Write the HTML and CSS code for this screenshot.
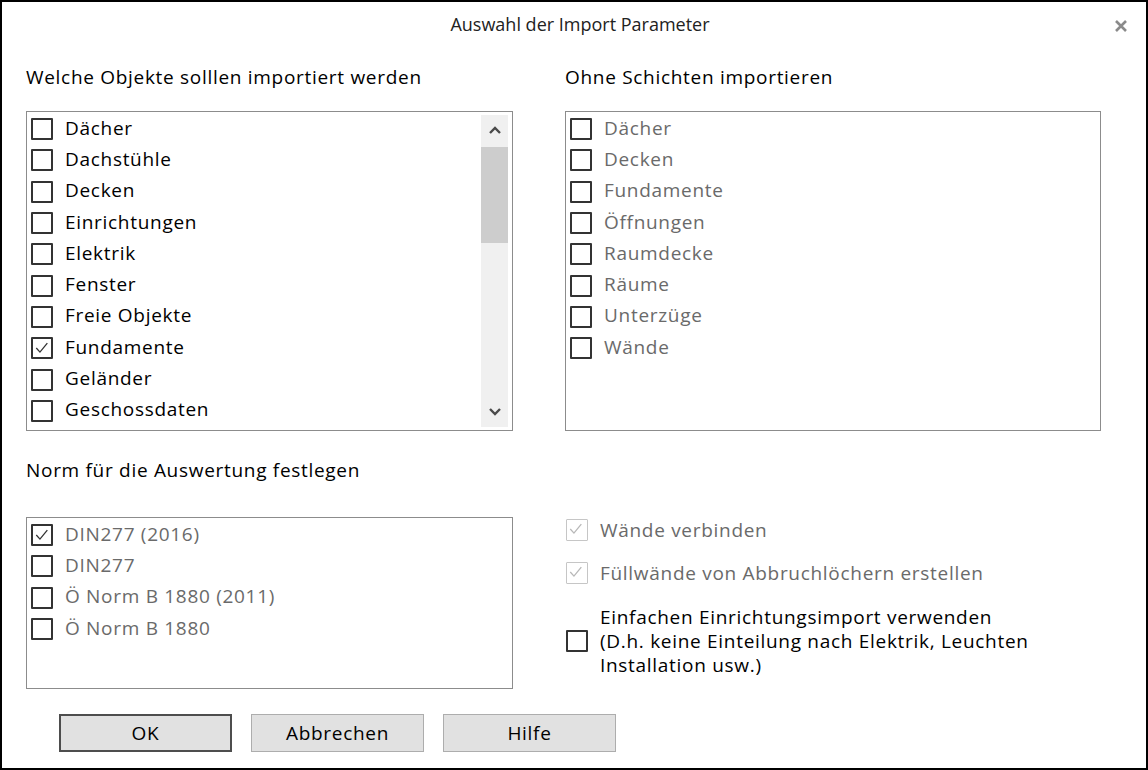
FILE: index.html
```html
<!DOCTYPE html>
<html lang="de">
  <head>
    <meta charset="UTF-8" />
    <title>Auswahl der Import Parameter</title>
    <link rel="stylesheet" href="styles.css">
  </head>
  <body>
    <div class="dialog">
      <div class="titlebar">
        <span class="title">Auswahl der Import Parameter</span>
        <span class="close">
          <svg width="14" height="14" viewBox="0 0 14 14">
            <path d="M2 2 L12 12 M12 2 L2 12" stroke="#8a8a8a" stroke-width="2.6" />
          </svg>
        </span>
      </div>

      <div class="top">
        <section class="col col-left">
          <h2>Welche Objekte solllen importiert werden</h2>
          <div class="listbox objects">
            <ul class="items">
              <li><span class="box"></span>Dächer</li>
              <li><span class="box"></span>Dachstühle</li>
              <li><span class="box"></span>Decken</li>
              <li><span class="box"></span>Einrichtungen</li>
              <li><span class="box"></span>Elektrik</li>
              <li><span class="box"></span>Fenster</li>
              <li><span class="box"></span>Freie Objekte</li>
              <li><span class="box checked"><svg viewBox="0 0 22 22"><polyline points="4,11 8.5,16 17.5,5" /></svg></span>Fundamente</li>
              <li><span class="box"></span>Geländer</li>
              <li><span class="box"></span>Geschossdaten</li>
            </ul>
            <div class="scrollbar">
              <div class="arrow">
                <svg width="14" height="10" viewBox="0 0 14 10"><polyline points="2,8 7,3 12,8" /></svg>
              </div>
              <div class="track"><div class="thumb"></div></div>
              <div class="arrow">
                <svg width="14" height="10" viewBox="0 0 14 10"><polyline points="2,2 7,7 12,2" /></svg>
              </div>
            </div>
          </div>
        </section>

        <section class="col col-right">
          <h2>Ohne Schichten importieren</h2>
          <div class="listbox layers">
            <ul class="items muted">
              <li><span class="box"></span>Dächer</li>
              <li><span class="box"></span>Decken</li>
              <li><span class="box"></span>Fundamente</li>
              <li><span class="box"></span>Öffnungen</li>
              <li><span class="box"></span>Raumdecke</li>
              <li><span class="box"></span>Räume</li>
              <li><span class="box"></span>Unterzüge</li>
              <li><span class="box"></span>Wände</li>
            </ul>
          </div>
        </section>
      </div>

      <div class="bottom">
        <section class="col col-left">
          <h2>Norm für die Auswertung festlegen</h2>
          <div class="listbox norm">
            <ul class="items muted">
              <li><span class="box checked"><svg viewBox="0 0 22 22"><polyline points="4,11 8.5,16 17.5,5" /></svg></span>DIN277 (2016)</li>
              <li><span class="box"></span>DIN277</li>
              <li><span class="box"></span>Ö Norm B 1880 (2011)</li>
              <li><span class="box"></span>Ö Norm B 1880</li>
            </ul>
          </div>
        </section>

        <div class="col options">
          <label class="option disabled">
            <span class="box checked"><svg viewBox="0 0 22 22"><polyline points="4,11 8.5,16 17.5,5" /></svg></span>
            <span>Wände verbinden</span>
          </label>
          <label class="option disabled second">
            <span class="box checked"><svg viewBox="0 0 22 22"><polyline points="4,11 8.5,16 17.5,5" /></svg></span>
            <span>Füllwände von Abbruchlöchern erstellen</span>
          </label>
          <label class="option multi">
            <span class="box"></span>
            <span>Einfachen Einrichtungsimport verwenden<br />(D.h. keine Einteilung nach Elektrik, Leuchten<br />Installation usw.)</span>
          </label>
        </div>
      </div>

      <div class="buttons">
        <button class="default">OK</button>
        <button>Abbrechen</button>
        <button>Hilfe</button>
      </div>
    </div>
  </body>
</html>
```

FILE: styles.css
```css
html,
body {
  margin: 0;
  padding: 0;
  background-color: #fff;
}
.dialog {
  box-sizing: border-box;
  width: 1148px;
  height: 770px;
  border: 2px solid #000;
  background-color: #fff;
  font-family: "Open Sans", "Noto Sans", sans-serif;
  font-size: 19px;
  letter-spacing: 0.7px;
  color: #000;
}
.titlebar {
  position: relative;
  height: 44px;
  display: flex;
  align-items: center;
  justify-content: center;
}
.title {
  font-size: 18px;
  letter-spacing: 0;
  color: #222;
  margin-left: 12px;
}
.close {
  position: absolute;
  right: 18px;
  top: 17px;
  line-height: 0;
}
h2 {
  margin: 0;
  height: 24px;
  line-height: 24px;
  font-size: 19px;
  font-weight: normal;
  color: #000;
}
.top {
  display: flex;
  gap: 52px;
  padding: 19px 0 0 24px;
}
.col-left {
  width: 487px;
}
.col-right {
  width: 536px;
}
.listbox {
  box-sizing: border-box;
  margin-top: 22px;
  border: 1px solid #8c8c8c;
  background-color: #fff;
  display: flex;
}
.objects,
.layers {
  height: 320px;
}
.items {
  list-style: none;
  margin: 0;
  padding: 0 0 0 4px;
  flex: 1;
}
.items li {
  height: 31.3px;
  display: flex;
  align-items: center;
  gap: 12px;
}
.items.muted li {
  color: #6a6a6a;
}
.box {
  box-sizing: border-box;
  flex: none;
  width: 22px;
  height: 22px;
  border: 2px solid #333;
  border-radius: 1px;
  background-color: #fff;
  margin-top: 3px;
  line-height: 0;
}
.box svg {
  width: 18px;
  height: 18px;
}
.box polyline {
  fill: none;
  stroke: #333;
  stroke-width: 1.6;
}
.scrollbar {
  width: 27px;
  margin: 3px 4px 3px 0;
  background-color: #f0f0f0;
  display: flex;
  flex-direction: column;
}
.arrow {
  height: 30px;
  display: flex;
  align-items: center;
  justify-content: center;
}
.arrow polyline {
  fill: none;
  stroke: #4a4a4a;
  stroke-width: 2.4;
}
.track {
  flex: 1;
}
.thumb {
  height: 96px;
  margin-top: 2px;
  background-color: #cdcdcd;
}
.bottom {
  display: flex;
  gap: 52px;
  padding: 27px 0 0 24px;
}
.norm {
  height: 172px;
  margin-top: 35px;
}
.options {
  padding-top: 59px;
  display: flex;
  flex-direction: column;
}
.option {
  display: flex;
  align-items: center;
  gap: 12px;
  line-height: 26px;
  margin-left: 1px;
}
.option .box {
  margin-top: 0;
}
.option.disabled {
  color: #6a6a6a;
}
.option.disabled .box {
  border-color: #c6c6c6;
  border-width: 1.5px;
}
.option.disabled polyline {
  stroke: #b8b8b8;
}
.option.second {
  margin-top: 17px;
}
.option.multi {
  margin-top: 19px;
  line-height: 24px;
}
.buttons {
  display: flex;
  gap: 19px;
  padding: 25px 0 0 57px;
}
button {
  box-sizing: border-box;
  width: 173px;
  height: 38px;
  background-color: #e1e1e1;
  border: 1px solid #adadad;
  font-family: "Open Sans", "Noto Sans", sans-serif;
  font-size: 19px;
  letter-spacing: 0.7px;
  color: #000;
  padding: 0;
}
button.default {
  border: 2px solid #4d4d4d;
}
```
